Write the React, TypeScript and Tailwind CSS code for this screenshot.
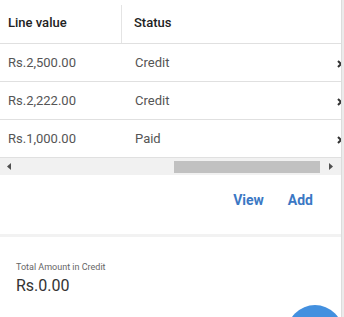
import React from "react";

const rows = [
  { v: "Rs.2,500.00", s: "Credit" },
  { v: "Rs.2,222.00", s: "Credit" },
  { v: "Rs.1,000.00", s: "Paid" },
];

export default function App() {
  return (
    <div
      className="relative w-[344px] h-[317px] overflow-hidden bg-white flex"
      style={{ fontFamily: "Roboto, 'Liberation Sans', sans-serif" }}
    >
      <div className="w-[341px] flex flex-col">
        <div className="relative">
          <div className="flex h-[44px] border-b border-[#e0e0e0]">
            <div className="w-[121px] flex items-center pl-[8px] pt-[2px] text-[13px] font-medium text-[#222]">
              Line value
            </div>
            <div className="flex flex-col justify-end">
              <div className="w-px h-[38px] bg-[#e4e4e4]" />
            </div>
            <div className="flex-1 flex items-center pl-[12px] pt-[2px] text-[13px] font-medium text-[#222]">
              Status
            </div>
          </div>
          {rows.map((r) => (
            <div key={r.v} className="flex h-[38px] border-b border-[#e0e0e0] text-[13px] text-[#555]">
              <div className="w-[122px] flex items-center pl-[8px]">{r.v}</div>
              <div className="flex-1 flex items-center pl-[13px]">{r.s}</div>
              <div className="w-[4px] flex items-center pt-[2px] overflow-hidden">
                <svg width="5" height="8" viewBox="0 0 5 8" className="shrink-0">
                  <path d="M1 1 L4 4 L1 7" fill="none" stroke="#333" strokeWidth="2" />
                </svg>
              </div>
            </div>
          ))}
          <div className="flex h-[17px] bg-[#f1f1f1] items-center">
            <div className="w-[17px] flex items-center justify-center">
              <svg width="4" height="7" viewBox="0 0 4 7">
                <path d="M4 0 L0 3.5 L4 7 Z" fill="#505050" />
              </svg>
            </div>
            <div className="w-[157px]" />
            <div className="w-[146px] h-[12px] bg-[#c1c1c1]" />
            <div className="flex-1 flex items-center justify-center">
              <svg width="4" height="7" viewBox="0 0 4 7">
                <path d="M0 0 L4 3.5 L0 7 Z" fill="#505050" />
              </svg>
            </div>
          </div>
        </div>
        <div className="flex justify-end gap-[24px] pr-[28px] pt-[15px] h-[59px] text-[14px] font-bold text-[#3b78c4]">
          <span>View</span>
          <span>Add</span>
        </div>
        <div className="h-[3px] bg-[#f2f2f2]" />
        <div className="pl-[16px] pt-[24px]">
          <div className="text-[9px] text-[#666] leading-[12px]">Total Amount in Credit</div>
          <div className="text-[16px] text-[#333] mt-[3px] leading-[20px]">Rs.0.00</div>
        </div>
      </div>
      <div className="w-[3px] bg-[#ebebeb] border-l border-[#dcdcdc]" />
      <div className="absolute left-[287px] top-[305px] w-[56px] h-[56px] rounded-full bg-[#4390df]" />
    </div>
  );
}
